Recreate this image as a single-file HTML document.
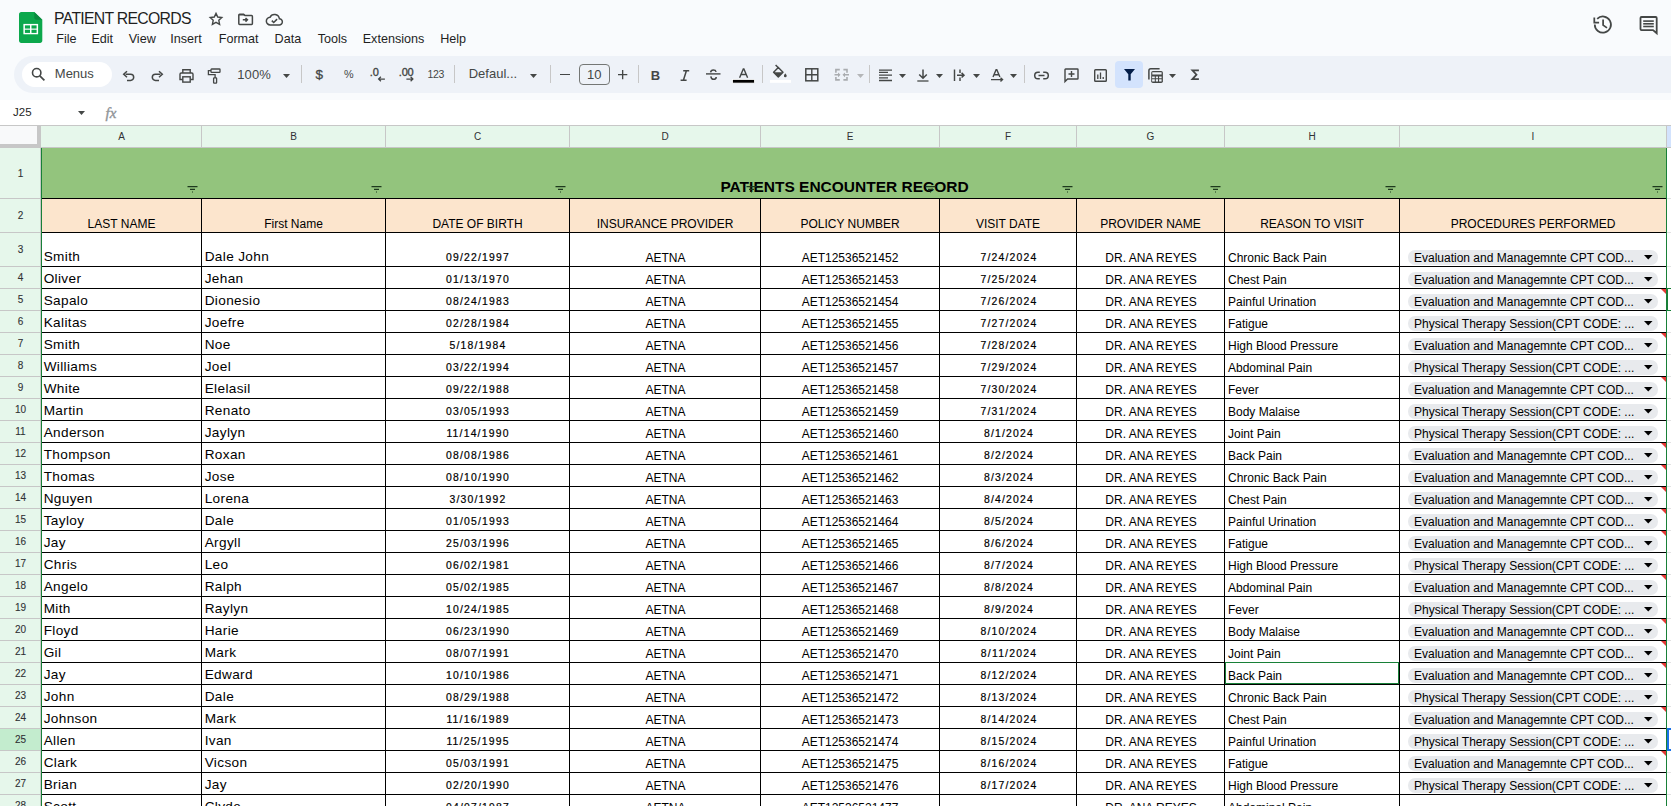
<!DOCTYPE html>
<html><head><meta charset="utf-8"><title>PATIENT RECORDS</title>
<style>
html,body{margin:0;padding:0;}
body{width:1671px;height:806px;overflow:hidden;position:relative;background:#f9fbfd;font-family:"Liberation Sans",sans-serif;}
.t{position:absolute;white-space:nowrap;line-height:1;font-family:"Liberation Sans",sans-serif;}
.r{position:absolute;}
svg{position:absolute;overflow:visible;}
</style></head><body>

<svg style="left:19px;top:12px" width="24" height="31" viewBox="0 0 24 32" preserveAspectRatio="none">
<path d="M2.2 0H15.3L23.3 8V29.8C23.3 31 22.3 32 21.1 32H2.2C1 32 0 31 0 29.8V2.2C0 1 1 0 2.2 0Z" fill="#0ca84c"/>
<path d="M15.3 0L23.3 8H17.3C16.2 8 15.3 7.1 15.3 6Z" fill="#0a8a3e"/>
<rect x="4.4" y="12.3" width="14.7" height="10.7" fill="#fff"/>
<rect x="5.9" y="13.8" width="5.1" height="3.3" fill="#0ca84c"/>
<rect x="12.5" y="13.8" width="5.1" height="3.3" fill="#0ca84c"/>
<rect x="5.9" y="18.3" width="5.1" height="3.3" fill="#0ca84c"/>
<rect x="12.5" y="18.3" width="5.1" height="3.3" fill="#0ca84c"/>
</svg>
<div class="t" style="left:54.1px;top:10.93px;font-size:15.8px;color:#1f1f1f;font-weight:normal;letter-spacing:-0.72px;">PATIENT RECORDS</div>
<svg style="left:208px;top:11px" width="16" height="16" viewBox="0 0 24 24"><path d="M12 3.5l2.6 5.6 6.1.7-4.5 4.2 1.2 6L12 17l-5.4 3 1.2-6-4.5-4.2 6.1-.7z" fill="none" stroke="#444746" stroke-width="2.1" stroke-linejoin="miter"/></svg>
<svg style="left:237.5px;top:13px" width="16" height="12" viewBox="0 0 16 12"><path d="M1.6 1.2h4l1.4 1.4h6.6c.5 0 .8.3.8.8v7.2c0 .5-.3.8-.8.8H1.6c-.5 0-.8-.3-.8-.8V2c0-.5.3-.8.8-.8z" fill="none" stroke="#444746" stroke-width="1.5"/><path d="M1 1h4.8l1.6 1.6H1z" fill="#444746"/><path d="M4.8 6.8h4.2M7.5 5l1.9 1.8-1.9 1.8" fill="none" stroke="#444746" stroke-width="1.5"/></svg>
<svg style="left:265.5px;top:13px" width="17" height="13" viewBox="0 0 17 13"><path d="M4.3 11.9h8.8a3.1 3.1 0 0 0 .3-6.2A5 5 0 0 0 4 4.3 3.8 3.8 0 0 0 4.3 11.9z" fill="none" stroke="#444746" stroke-width="1.5"/><path d="M5.8 7.6l1.9 1.9 3.4-3.4" fill="none" stroke="#444746" stroke-width="1.5"/></svg>
<div class="t" style="left:56.2px;top:32.73px;font-size:12.6px;color:#1f1f1f;font-weight:normal;">File</div>
<div class="t" style="left:91.4px;top:32.73px;font-size:12.6px;color:#1f1f1f;font-weight:normal;">Edit</div>
<div class="t" style="left:128.7px;top:32.73px;font-size:12.6px;color:#1f1f1f;font-weight:normal;">View</div>
<div class="t" style="left:170.2px;top:32.73px;font-size:12.6px;color:#1f1f1f;font-weight:normal;">Insert</div>
<div class="t" style="left:218.7px;top:32.73px;font-size:12.6px;color:#1f1f1f;font-weight:normal;">Format</div>
<div class="t" style="left:274.59999999999997px;top:32.73px;font-size:12.6px;color:#1f1f1f;font-weight:normal;">Data</div>
<div class="t" style="left:317.7px;top:32.73px;font-size:12.6px;color:#1f1f1f;font-weight:normal;">Tools</div>
<div class="t" style="left:362.7px;top:32.73px;font-size:12.6px;color:#1f1f1f;font-weight:normal;">Extensions</div>
<div class="t" style="left:440.2px;top:32.73px;font-size:12.6px;color:#1f1f1f;font-weight:normal;">Help</div>
<svg style="left:1593px;top:15px" width="20" height="20" viewBox="0 0 20 20"><path d="M1.75 9.6A8.1 8.1 0 1 0 4.2 3.8" fill="none" stroke="#444746" stroke-width="1.75"/><path d="M1.3 2.6V7.5H6.1" fill="none" stroke="#444746" stroke-width="1.75"/><path d="M10.1 4.4V10.1L14 12.9" fill="none" stroke="#444746" stroke-width="1.75"/></svg>
<svg style="left:1639px;top:16px" width="20" height="19" viewBox="0 0 20 19"><path d="M1.5 2C1.5 1.4 1.9 1 2.5 1H16.7C17.3 1 17.7 1.4 17.7 2V17.2L14 14.1H2.5C1.9 14.1 1.5 13.7 1.5 13.1Z" fill="none" stroke="#444746" stroke-width="1.8"/><rect x="4.2" y="4.3" width="10.6" height="1.6" fill="#444746"/><rect x="4.2" y="7" width="10.6" height="1.6" fill="#444746"/><rect x="4.2" y="9.7" width="10.6" height="1.6" fill="#444746"/></svg>
<div class="r" style="left:14px;top:56px;width:1700px;height:37px;background:#eef2f8;border-radius:18.5px;"></div>
<div class="r" style="left:21.5px;top:62px;width:90.5px;height:25px;background:#fff;border-radius:12.5px;"></div>
<svg style="left:31px;top:67px" width="15" height="15" viewBox="0 0 15 15"><circle cx="5.7" cy="5.7" r="4.2" fill="none" stroke="#444746" stroke-width="1.6"/><path d="M8.8 8.8l4.6 4.6" stroke="#444746" stroke-width="1.7"/></svg>
<div class="t" style="left:54.8px;top:66.80px;font-size:13px;color:#444746;font-weight:normal;">Menus</div>
<svg style="left:122px;top:70px" width="13" height="12" viewBox="0 0 13 12"><path d="M3.6 4.2h5a3.1 3.1 0 0 1 0 6.2H5" fill="none" stroke="#444746" stroke-width="1.5"/><path d="M5 1.2L1.7 4.2 5 7.2" fill="none" stroke="#444746" stroke-width="1.5"/></svg>
<svg style="left:151px;top:70px" width="13" height="12" viewBox="0 0 13 12"><path d="M9.4 4.2h-5a3.1 3.1 0 0 0 0 6.2H8" fill="none" stroke="#444746" stroke-width="1.5"/><path d="M8 1.2l3.3 3L8 7.2" fill="none" stroke="#444746" stroke-width="1.5"/></svg>
<svg style="left:178.5px;top:68.5px" width="15" height="14" viewBox="0 0 15 14"><path d="M3.8 4V0.8h7.4V4" fill="none" stroke="#444746" stroke-width="1.4"/><path d="M3.5 10.5H1V5.2C1 4.5 1.5 4 2.2 4h10.6c.7 0 1.2.5 1.2 1.2v5.3h-2.5" fill="none" stroke="#444746" stroke-width="1.4"/><rect x="3.8" y="7.8" width="7.4" height="5.3" fill="none" stroke="#444746" stroke-width="1.4"/></svg>
<svg style="left:207px;top:67.5px" width="14" height="16" viewBox="0 0 14 16"><rect x="4" y="1" width="9" height="3.4" rx="0.6" fill="none" stroke="#444746" stroke-width="1.3"/><path d="M4 2.7H1.4v4h6.7v3.2" fill="none" stroke="#444746" stroke-width="1.3"/><rect x="6.6" y="9.9" width="3" height="5.3" rx="0.6" fill="none" stroke="#444746" stroke-width="1.3"/></svg>
<div class="t" style="left:237.2px;top:68.40px;font-size:13px;color:#444746;font-weight:normal;letter-spacing:0.15px;">100%</div>
<svg style="left:283px;top:73.5px" width="7" height="4" viewBox="0 0 7 4"><path d="M0 0h7L3.5 4z" fill="#444746"/></svg>
<div class="r" style="left:301px;top:65px;width:1px;height:18px;background:#c7c7c7;"></div>
<div class="t" style="left:315.6px;top:67.97px;font-size:13.5px;color:#444746;font-weight:normal;-webkit-text-stroke:0.3px #444746;">$</div>
<div class="t" style="left:344px;top:68.66px;font-size:10.8px;color:#444746;font-weight:normal;">%</div>
<div class="t" style="left:369.8px;top:66.59px;font-size:11px;color:#444746;font-weight:normal;-webkit-text-stroke:0.35px #444746;">.0</div>
<svg style="left:377px;top:76.4px" width="9" height="6" viewBox="0 0 9 6"><path d="M7.9 3H1.6M3.9 0.8L1.6 3l2.3 2.2" fill="none" stroke="#444746" stroke-width="1.25"/></svg>
<div class="t" style="left:398.8px;top:66.59px;font-size:11px;color:#444746;font-weight:normal;-webkit-text-stroke:0.35px #444746;letter-spacing:-0.2px;">.00</div>
<svg style="left:405px;top:76.4px" width="9" height="6" viewBox="0 0 9 6"><path d="M1.4 3h6.5M5.6 0.8L7.9 3 5.6 5.2" fill="none" stroke="#444746" stroke-width="1.25"/></svg>
<div class="t" style="left:427.5px;top:68.91px;font-size:10.5px;color:#444746;font-weight:normal;letter-spacing:-0.3px;">123</div>
<div class="r" style="left:454px;top:65px;width:1px;height:18px;background:#c7c7c7;"></div>
<div class="t" style="left:468.7px;top:67.20px;font-size:13px;color:#444746;font-weight:normal;">Defaul...</div>
<svg style="left:530px;top:73.5px" width="7" height="4" viewBox="0 0 7 4"><path d="M0 0h7L3.5 4z" fill="#444746"/></svg>
<div class="r" style="left:550px;top:65px;width:1px;height:18px;background:#c7c7c7;"></div>
<div class="r" style="left:560px;top:74.1px;width:9.7px;height:1.3px;background:#444746;"></div>
<div class="r" style="left:579px;top:64px;width:31px;height:20.5px;background:transparent;border:1.1px solid #747775;border-radius:4px;box-sizing:border-box;"></div>
<div class="t" style="left:294.20000000000005px;width:600px;text-align:center;top:67.60px;font-size:13px;color:#444746;font-weight:normal;">10</div>
<svg style="left:618.2px;top:70.2px" width="9.3" height="9.3" viewBox="0 0 9.3 9.3"><path d="M0 4.65h9.3M4.65 0v9.3" stroke="#444746" stroke-width="1.35"/></svg>
<div class="r" style="left:638px;top:65px;width:1px;height:18px;background:#c7c7c7;"></div>
<div class="t" style="left:650.8px;top:68.50px;font-size:13px;color:#444746;font-weight:bold;">B</div>
<svg style="left:680px;top:69.5px" width="10" height="11" viewBox="0 0 10 11"><path d="M3.2 0.8h6M0.6 10.3h6M6.4 0.8L3.4 10.3" fill="none" stroke="#444746" stroke-width="1.5"/></svg>
<svg style="left:706px;top:69.1px" width="15" height="12" viewBox="0 0 15 12"><path d="M0 4.9h14.5" stroke="#444746" stroke-width="1.4"/><path d="M4.6 3.4C4.8 1.8 5.9 1 7.4 1c1.4 0 2.4.7 2.7 1.9" fill="none" stroke="#444746" stroke-width="1.5"/><path d="M4.8 7.3c.3 1.9 1.3 3 2.8 3 1.6 0 2.6-1 2.6-2.4" fill="none" stroke="#444746" stroke-width="1.5"/></svg>
<svg style="left:732px;top:68px" width="23" height="16" viewBox="0 0 23 16"><path d="M7.6 9.8L11.3 1h.6l3.7 8.8M9 6.5h5.3" fill="none" stroke="#444746" stroke-width="1.4"/><rect x="0.5" y="11.5" width="22" height="3.6" fill="#000" stroke="#fff" stroke-width="0.8"/></svg>
<div class="r" style="left:762px;top:65px;width:1px;height:18px;background:#c7c7c7;"></div>
<svg style="left:770px;top:64px" width="22" height="20" viewBox="0 0 22 20"><path d="M3.6 8.2L8.3 3.5 13 8.2 8.3 12.9z" fill="none" stroke="#444746" stroke-width="1.45" stroke-linejoin="round"/><path d="M3.6 8.2H13L8.3 12.9z" fill="#444746"/><path d="M5.6 1L8.6 4" stroke="#444746" stroke-width="1.45"/><circle cx="15.3" cy="11.9" r="1.35" fill="#444746"/><path d="M15.3 9.3l1.2 2.3h-2.4z" fill="#444746"/><rect x="0" y="15.9" width="21" height="2.9" fill="#fff"/></svg>
<svg style="left:804.5px;top:68px" width="14" height="14" viewBox="0 0 14 14"><rect x="0.8" y="0.8" width="12" height="12" fill="none" stroke="#444746" stroke-width="1.5"/><path d="M6.8 0.8v12M0.8 6.8h12" stroke="#444746" stroke-width="1.4"/></svg>
<svg style="left:833px;top:67px" width="18" height="16" viewBox="0 0 18 16"><path d="M6.8 2.6H2.9V5.7M2.9 10.1V12.9H6.8M10.4 2.6H14V5.7M14 10.1V12.9H10.4" fill="none" stroke="#a9acaf" stroke-width="1.6"/><path d="M1.5 7.8H6M16 7.8H11.2" stroke="#a9acaf" stroke-width="1.6"/><path d="M5 5.4L7.5 7.8 5 10.2zM12 5.4L9.5 7.8 12 10.2z" fill="#a9acaf"/></svg>
<svg style="left:857px;top:73.8px" width="7" height="4" viewBox="0 0 7 4"><path d="M0 0h7L3.5 4z" fill="#b4b6b8"/></svg>
<div class="r" style="left:869px;top:65px;width:1px;height:18px;background:#c7c7c7;"></div>
<svg style="left:878.5px;top:68.5px" width="14" height="13" viewBox="0 0 14 13"><path d="M0 1.1h13M0 3.4h9M0 6.2h13M0 8.8h9M0 11.5h13" stroke="#444746" stroke-width="1.3"/></svg>
<svg style="left:899px;top:73.8px" width="7" height="4" viewBox="0 0 7 4"><path d="M0 0h7L3.5 4z" fill="#444746"/></svg>
<svg style="left:917px;top:68.5px" width="12" height="13" viewBox="0 0 12 13"><path d="M0.3 12h11.2" stroke="#444746" stroke-width="1.3"/><path d="M6 0.5v8.5M2.2 5.5L6 9.3l3.8-3.8" fill="none" stroke="#444746" stroke-width="1.5"/></svg>
<svg style="left:936px;top:73.8px" width="7" height="4" viewBox="0 0 7 4"><path d="M0 0h7L3.5 4z" fill="#444746"/></svg>
<svg style="left:953px;top:69px" width="13" height="13" viewBox="0 0 13 13"><path d="M1.5 0.6V11.9M7 0.6V3.9M7 8.4V11.9" stroke="#444746" stroke-width="1.45"/><path d="M4 6.2H10.6M8.6 3.9L11 6.2 8.6 8.5" fill="none" stroke="#444746" stroke-width="1.5"/></svg>
<svg style="left:973px;top:73.8px" width="7" height="4" viewBox="0 0 7 4"><path d="M0 0h7L3.5 4z" fill="#444746"/></svg>
<svg style="left:990.5px;top:68.5px" width="13" height="13" viewBox="0 0 13 13"><path d="M2 8l3.1-7.3h.7L8.9 8M3 5.7h5" fill="none" stroke="#444746" stroke-width="1.4"/><path d="M0 10.6h11.5M9.5 8.8l2 1.8-2 1.8" fill="none" stroke="#444746" stroke-width="1.4"/></svg>
<svg style="left:1010px;top:73.8px" width="7" height="4" viewBox="0 0 7 4"><path d="M0 0h7L3.5 4z" fill="#444746"/></svg>
<div class="r" style="left:1024px;top:65px;width:1px;height:18px;background:#c7c7c7;"></div>
<svg style="left:1034px;top:70.5px" width="15" height="9" viewBox="0 0 15 9"><path d="M5.8 1.2H4A3.3 3.3 0 0 0 4 7.8h1.8M9.2 1.2H11a3.3 3.3 0 0 1 0 6.6H9.2M4.5 4.5h6" fill="none" stroke="#444746" stroke-width="1.5"/></svg>
<svg style="left:1063.5px;top:67.5px" width="15" height="15" viewBox="0 0 15 15"><path d="M1 1.6C1 1.2 1.2 1 1.6 1h11.8c.4 0 .6.2.6.6v8.8c0 .4-.2.6-.6.6H3.6L1 13.6z" fill="none" stroke="#444746" stroke-width="1.4"/><path d="M7.5 3v6M4.5 6h6" stroke="#444746" stroke-width="1.4"/></svg>
<svg style="left:1094px;top:68.5px" width="13" height="13" viewBox="0 0 13 13"><rect x="0.7" y="0.7" width="11.6" height="11.6" rx="0.8" fill="none" stroke="#444746" stroke-width="1.4"/><path d="M3.8 5.5v4.5M6.5 3.5v6.5M9.2 8v2" stroke="#444746" stroke-width="1.3"/></svg>
<div class="r" style="left:1115px;top:61px;width:28px;height:26.5px;background:#d3e3fd;border-radius:4px;"></div>
<svg style="left:1123.5px;top:69px" width="11" height="12" viewBox="0 0 11 12"><path d="M0 0h11L6.7 5.2V11.6H4.3V5.2z" fill="#041e49"/></svg>
<svg style="left:1147px;top:67px" width="17" height="17" viewBox="0 0 17 17"><path d="M1.9 12.6V3.7C1.9 2.6 2.6 1.85 3.7 1.85H12.6" fill="none" stroke="#444746" stroke-width="1.5"/><rect x="4.2" y="4" width="11.7" height="11.9" rx="1.7" fill="#444746"/><path d="M5.3 5.3H14.6V7.6H5.3zM5.1 9.4H7.8V11.2H5.1zM8.85 9.4H11V11.2H8.85zM12.1 9.4H14.6V11.2H12.1zM5.1 12.3H7.8V14.6H5.1zM8.85 12.3H11V14.6H8.85zM12.1 12.3H14.6V14.6H12.1z" fill="#eef2f8"/></svg>
<svg style="left:1169px;top:73.8px" width="7" height="4" viewBox="0 0 7 4"><path d="M0 0h7L3.5 4z" fill="#444746"/></svg>
<svg style="left:1191px;top:69px" width="9" height="12" viewBox="0 0 9 12"><path d="M7.9 1.3H1.4L5.5 5.7 1.4 10.1H7.9" fill="none" stroke="#444746" stroke-width="1.75" stroke-linejoin="miter" stroke-miterlimit="3"/></svg>
<div class="r" style="left:0px;top:100px;width:1671px;height:25px;background:#fff;"></div>
<div class="t" style="left:13px;top:107.07px;font-size:11.5px;color:#1f1f1f;font-weight:normal;">J25</div>
<svg style="left:78px;top:111px" width="7" height="4" viewBox="0 0 7 4"><path d="M0 0h7L3.5 4z" fill="#444746"/></svg>
<div class="t" style="left:105.5px;top:105.60px;font-size:15px;color:#8f9397;font-weight:normal;font-family:'Liberation Serif',serif;-webkit-text-stroke:0.35px #8f9397;"><i>fx</i></div>
<div class="r" style="left:0px;top:125px;width:1671px;height:1px;background:#c7c7c7;"></div>
<div class="r" style="left:0px;top:126px;width:1671px;height:680px;background:#fff;"></div>
<div class="r" style="left:0px;top:126px;width:37px;height:18px;background:#f8f9fa;"></div>
<div class="r" style="left:37px;top:126px;width:4px;height:22px;background:#c7c7c7;"></div>
<div class="r" style="left:0px;top:144px;width:41px;height:4px;background:#c7c7c7;"></div>
<div class="r" style="left:41px;top:126px;width:1626px;height:21px;background:#e6f7eb;"></div>
<div class="r" style="left:1667px;top:126px;width:10px;height:21px;background:#d3e3fd;"></div>
<div class="r" style="left:41px;top:147px;width:1630px;height:1px;background:#c7c7c7;"></div>
<div class="r" style="left:201px;top:126px;width:1px;height:21px;background:#c7c7c7;"></div>
<div class="t" style="left:-178.5px;width:600px;text-align:center;top:132.44px;font-size:10px;color:#303134;font-weight:normal;">A</div>
<div class="r" style="left:385px;top:126px;width:1px;height:21px;background:#c7c7c7;"></div>
<div class="t" style="left:-6.5px;width:600px;text-align:center;top:132.44px;font-size:10px;color:#303134;font-weight:normal;">B</div>
<div class="r" style="left:569px;top:126px;width:1px;height:21px;background:#c7c7c7;"></div>
<div class="t" style="left:177.5px;width:600px;text-align:center;top:132.44px;font-size:10px;color:#303134;font-weight:normal;">C</div>
<div class="r" style="left:760px;top:126px;width:1px;height:21px;background:#c7c7c7;"></div>
<div class="t" style="left:365.0px;width:600px;text-align:center;top:132.44px;font-size:10px;color:#303134;font-weight:normal;">D</div>
<div class="r" style="left:939px;top:126px;width:1px;height:21px;background:#c7c7c7;"></div>
<div class="t" style="left:550.0px;width:600px;text-align:center;top:132.44px;font-size:10px;color:#303134;font-weight:normal;">E</div>
<div class="r" style="left:1076px;top:126px;width:1px;height:21px;background:#c7c7c7;"></div>
<div class="t" style="left:708.0px;width:600px;text-align:center;top:132.44px;font-size:10px;color:#303134;font-weight:normal;">F</div>
<div class="r" style="left:1224px;top:126px;width:1px;height:21px;background:#c7c7c7;"></div>
<div class="t" style="left:850.5px;width:600px;text-align:center;top:132.44px;font-size:10px;color:#303134;font-weight:normal;">G</div>
<div class="r" style="left:1399px;top:126px;width:1px;height:21px;background:#c7c7c7;"></div>
<div class="t" style="left:1012.0px;width:600px;text-align:center;top:132.44px;font-size:10px;color:#303134;font-weight:normal;">H</div>
<div class="r" style="left:1666px;top:126px;width:1px;height:21px;background:#c7c7c7;"></div>
<div class="t" style="left:1233.0px;width:600px;text-align:center;top:132.44px;font-size:10px;color:#303134;font-weight:normal;">I</div>
<div class="r" style="left:0px;top:148px;width:40px;height:658px;background:#e6f7eb;"></div>
<div class="r" style="left:40px;top:148px;width:1px;height:658px;background:#c7c7c7;"></div>
<div class="r" style="left:0px;top:198px;width:40px;height:1px;background:#c7c7c7;"></div>
<div class="t" style="left:-279.5px;width:600px;text-align:center;top:168.53px;font-size:10px;color:#303134;font-weight:normal;-webkit-text-stroke:0.1px #303134;">1</div>
<div class="r" style="left:0px;top:232px;width:40px;height:1px;background:#c7c7c7;"></div>
<div class="t" style="left:-279.5px;width:600px;text-align:center;top:211.03px;font-size:10px;color:#303134;font-weight:normal;-webkit-text-stroke:0.1px #303134;">2</div>
<div class="r" style="left:0px;top:266px;width:40px;height:1px;background:#c7c7c7;"></div>
<div class="t" style="left:-279.5px;width:600px;text-align:center;top:245.03px;font-size:10px;color:#303134;font-weight:normal;-webkit-text-stroke:0.1px #303134;">3</div>
<div class="r" style="left:0px;top:288px;width:40px;height:1px;background:#c7c7c7;"></div>
<div class="t" style="left:-279.5px;width:600px;text-align:center;top:273.04px;font-size:10px;color:#303134;font-weight:normal;-webkit-text-stroke:0.1px #303134;">4</div>
<div class="r" style="left:0px;top:310px;width:40px;height:1px;background:#c7c7c7;"></div>
<div class="t" style="left:-279.5px;width:600px;text-align:center;top:295.04px;font-size:10px;color:#303134;font-weight:normal;-webkit-text-stroke:0.1px #303134;">5</div>
<div class="r" style="left:0px;top:332px;width:40px;height:1px;background:#c7c7c7;"></div>
<div class="t" style="left:-279.5px;width:600px;text-align:center;top:317.04px;font-size:10px;color:#303134;font-weight:normal;-webkit-text-stroke:0.1px #303134;">6</div>
<div class="r" style="left:0px;top:354px;width:40px;height:1px;background:#c7c7c7;"></div>
<div class="t" style="left:-279.5px;width:600px;text-align:center;top:339.04px;font-size:10px;color:#303134;font-weight:normal;-webkit-text-stroke:0.1px #303134;">7</div>
<div class="r" style="left:0px;top:376px;width:40px;height:1px;background:#c7c7c7;"></div>
<div class="t" style="left:-279.5px;width:600px;text-align:center;top:361.04px;font-size:10px;color:#303134;font-weight:normal;-webkit-text-stroke:0.1px #303134;">8</div>
<div class="r" style="left:0px;top:398px;width:40px;height:1px;background:#c7c7c7;"></div>
<div class="t" style="left:-279.5px;width:600px;text-align:center;top:383.04px;font-size:10px;color:#303134;font-weight:normal;-webkit-text-stroke:0.1px #303134;">9</div>
<div class="r" style="left:0px;top:420px;width:40px;height:1px;background:#c7c7c7;"></div>
<div class="t" style="left:-279.5px;width:600px;text-align:center;top:405.04px;font-size:10px;color:#303134;font-weight:normal;-webkit-text-stroke:0.1px #303134;">10</div>
<div class="r" style="left:0px;top:442px;width:40px;height:1px;background:#c7c7c7;"></div>
<div class="t" style="left:-279.5px;width:600px;text-align:center;top:427.04px;font-size:10px;color:#303134;font-weight:normal;-webkit-text-stroke:0.1px #303134;">11</div>
<div class="r" style="left:0px;top:464px;width:40px;height:1px;background:#c7c7c7;"></div>
<div class="t" style="left:-279.5px;width:600px;text-align:center;top:449.04px;font-size:10px;color:#303134;font-weight:normal;-webkit-text-stroke:0.1px #303134;">12</div>
<div class="r" style="left:0px;top:486px;width:40px;height:1px;background:#c7c7c7;"></div>
<div class="t" style="left:-279.5px;width:600px;text-align:center;top:471.04px;font-size:10px;color:#303134;font-weight:normal;-webkit-text-stroke:0.1px #303134;">13</div>
<div class="r" style="left:0px;top:508px;width:40px;height:1px;background:#c7c7c7;"></div>
<div class="t" style="left:-279.5px;width:600px;text-align:center;top:493.04px;font-size:10px;color:#303134;font-weight:normal;-webkit-text-stroke:0.1px #303134;">14</div>
<div class="r" style="left:0px;top:530px;width:40px;height:1px;background:#c7c7c7;"></div>
<div class="t" style="left:-279.5px;width:600px;text-align:center;top:515.03px;font-size:10px;color:#303134;font-weight:normal;-webkit-text-stroke:0.1px #303134;">15</div>
<div class="r" style="left:0px;top:552px;width:40px;height:1px;background:#c7c7c7;"></div>
<div class="t" style="left:-279.5px;width:600px;text-align:center;top:537.03px;font-size:10px;color:#303134;font-weight:normal;-webkit-text-stroke:0.1px #303134;">16</div>
<div class="r" style="left:0px;top:574px;width:40px;height:1px;background:#c7c7c7;"></div>
<div class="t" style="left:-279.5px;width:600px;text-align:center;top:559.03px;font-size:10px;color:#303134;font-weight:normal;-webkit-text-stroke:0.1px #303134;">17</div>
<div class="r" style="left:0px;top:596px;width:40px;height:1px;background:#c7c7c7;"></div>
<div class="t" style="left:-279.5px;width:600px;text-align:center;top:581.03px;font-size:10px;color:#303134;font-weight:normal;-webkit-text-stroke:0.1px #303134;">18</div>
<div class="r" style="left:0px;top:618px;width:40px;height:1px;background:#c7c7c7;"></div>
<div class="t" style="left:-279.5px;width:600px;text-align:center;top:603.03px;font-size:10px;color:#303134;font-weight:normal;-webkit-text-stroke:0.1px #303134;">19</div>
<div class="r" style="left:0px;top:640px;width:40px;height:1px;background:#c7c7c7;"></div>
<div class="t" style="left:-279.5px;width:600px;text-align:center;top:625.03px;font-size:10px;color:#303134;font-weight:normal;-webkit-text-stroke:0.1px #303134;">20</div>
<div class="r" style="left:0px;top:662px;width:40px;height:1px;background:#c7c7c7;"></div>
<div class="t" style="left:-279.5px;width:600px;text-align:center;top:647.03px;font-size:10px;color:#303134;font-weight:normal;-webkit-text-stroke:0.1px #303134;">21</div>
<div class="r" style="left:0px;top:684px;width:40px;height:1px;background:#c7c7c7;"></div>
<div class="t" style="left:-279.5px;width:600px;text-align:center;top:669.03px;font-size:10px;color:#303134;font-weight:normal;-webkit-text-stroke:0.1px #303134;">22</div>
<div class="r" style="left:0px;top:706px;width:40px;height:1px;background:#c7c7c7;"></div>
<div class="t" style="left:-279.5px;width:600px;text-align:center;top:691.03px;font-size:10px;color:#303134;font-weight:normal;-webkit-text-stroke:0.1px #303134;">23</div>
<div class="r" style="left:0px;top:728px;width:40px;height:1px;background:#c7c7c7;"></div>
<div class="t" style="left:-279.5px;width:600px;text-align:center;top:713.03px;font-size:10px;color:#303134;font-weight:normal;-webkit-text-stroke:0.1px #303134;">24</div>
<div class="r" style="left:0px;top:729px;width:40px;height:21px;background:#c3ecce;"></div>
<div class="r" style="left:0px;top:750px;width:40px;height:1px;background:#c7c7c7;"></div>
<div class="t" style="left:-279.5px;width:600px;text-align:center;top:735.03px;font-size:10px;color:#303134;font-weight:normal;-webkit-text-stroke:0.1px #303134;">25</div>
<div class="r" style="left:0px;top:772px;width:40px;height:1px;background:#c7c7c7;"></div>
<div class="t" style="left:-279.5px;width:600px;text-align:center;top:757.03px;font-size:10px;color:#303134;font-weight:normal;-webkit-text-stroke:0.1px #303134;">26</div>
<div class="r" style="left:0px;top:794px;width:40px;height:1px;background:#c7c7c7;"></div>
<div class="t" style="left:-279.5px;width:600px;text-align:center;top:779.03px;font-size:10px;color:#303134;font-weight:normal;-webkit-text-stroke:0.1px #303134;">27</div>
<div class="r" style="left:0px;top:816px;width:40px;height:1px;background:#c7c7c7;"></div>
<div class="t" style="left:-279.5px;width:600px;text-align:center;top:801.03px;font-size:10px;color:#303134;font-weight:normal;-webkit-text-stroke:0.1px #303134;">28</div>
<div class="r" style="left:41px;top:148px;width:1625px;height:50px;background:#93c47d;"></div>
<div class="t" style="left:720.4px;top:179.48px;font-size:15.5px;color:#000;font-weight:bold;">PATIENTS ENCOUNTER RECORD</div>
<svg style="left:187px;top:185px" width="11" height="8" viewBox="0 0 11 8"><path d="M0.5 1.6h10M3 4.4h5M5 7h1" stroke="#1e3a1e" stroke-width="1.2"/></svg>
<svg style="left:371px;top:185px" width="11" height="8" viewBox="0 0 11 8"><path d="M0.5 1.6h10M3 4.4h5M5 7h1" stroke="#1e3a1e" stroke-width="1.2"/></svg>
<svg style="left:555px;top:185px" width="11" height="8" viewBox="0 0 11 8"><path d="M0.5 1.6h10M3 4.4h5M5 7h1" stroke="#1e3a1e" stroke-width="1.2"/></svg>
<svg style="left:746px;top:185px" width="11" height="8" viewBox="0 0 11 8"><path d="M0.5 1.6h10M3 4.4h5M5 7h1" stroke="#1e3a1e" stroke-width="1.2"/></svg>
<svg style="left:925px;top:185px" width="11" height="8" viewBox="0 0 11 8"><path d="M0.5 1.6h10M3 4.4h5M5 7h1" stroke="#1e3a1e" stroke-width="1.2"/></svg>
<svg style="left:1062px;top:185px" width="11" height="8" viewBox="0 0 11 8"><path d="M0.5 1.6h10M3 4.4h5M5 7h1" stroke="#1e3a1e" stroke-width="1.2"/></svg>
<svg style="left:1210px;top:185px" width="11" height="8" viewBox="0 0 11 8"><path d="M0.5 1.6h10M3 4.4h5M5 7h1" stroke="#1e3a1e" stroke-width="1.2"/></svg>
<svg style="left:1385px;top:185px" width="11" height="8" viewBox="0 0 11 8"><path d="M0.5 1.6h10M3 4.4h5M5 7h1" stroke="#1e3a1e" stroke-width="1.2"/></svg>
<svg style="left:1652px;top:185px" width="11" height="8" viewBox="0 0 11 8"><path d="M0.5 1.6h10M3 4.4h5M5 7h1" stroke="#1e3a1e" stroke-width="1.2"/></svg>
<div class="r" style="left:41px;top:199px;width:1625px;height:33px;background:#fce5cd;"></div>
<div class="t" style="left:-178.5px;width:600px;text-align:center;top:217.84px;font-size:12px;color:#000;font-weight:normal;">LAST NAME</div>
<div class="t" style="left:-6.5px;width:600px;text-align:center;top:217.84px;font-size:12px;color:#000;font-weight:normal;">First Name</div>
<div class="t" style="left:177.5px;width:600px;text-align:center;top:217.84px;font-size:12px;color:#000;font-weight:normal;">DATE OF BIRTH</div>
<div class="t" style="left:365.0px;width:600px;text-align:center;top:217.84px;font-size:12px;color:#000;font-weight:normal;">INSURANCE PROVIDER</div>
<div class="t" style="left:550.0px;width:600px;text-align:center;top:217.84px;font-size:12px;color:#000;font-weight:normal;">POLICY NUMBER</div>
<div class="t" style="left:708.0px;width:600px;text-align:center;top:217.84px;font-size:12px;color:#000;font-weight:normal;">VISIT DATE</div>
<div class="t" style="left:850.5px;width:600px;text-align:center;top:217.84px;font-size:12px;color:#000;font-weight:normal;">PROVIDER NAME</div>
<div class="t" style="left:1012.0px;width:600px;text-align:center;top:217.84px;font-size:12px;color:#000;font-weight:normal;">REASON TO VISIT</div>
<div class="t" style="left:1233.0px;width:600px;text-align:center;top:217.84px;font-size:12px;color:#000;font-weight:normal;">PROCEDURES PERFORMED</div>
<div class="t" style="left:43.7px;top:249.89px;font-size:13.6px;color:#000;font-weight:normal;letter-spacing:0.35px;">Smith</div>
<div class="t" style="left:204.7px;top:249.89px;font-size:13.6px;color:#000;font-weight:normal;letter-spacing:0.35px;">Dale John</div>
<div class="t" style="left:178px;width:600px;text-align:center;top:252.60px;font-size:10.4px;color:#000;font-weight:normal;letter-spacing:1.2px;-webkit-text-stroke:0.2px #000;">09/22/1997</div>
<div class="t" style="left:365.5px;width:600px;text-align:center;top:252.24px;font-size:12px;color:#000;font-weight:normal;">AETNA</div>
<div class="t" style="left:550px;width:600px;text-align:center;top:252.24px;font-size:12px;color:#000;font-weight:normal;">AET12536521452</div>
<div class="t" style="left:709px;width:600px;text-align:center;top:252.60px;font-size:10.4px;color:#000;font-weight:normal;letter-spacing:1.2px;-webkit-text-stroke:0.2px #000;">7/24/2024</div>
<div class="t" style="left:851px;width:600px;text-align:center;top:252.24px;font-size:12px;color:#000;font-weight:normal;">DR. ANA REYES</div>
<div class="t" style="left:1228px;top:252.24px;font-size:12px;color:#000;font-weight:normal;">Chronic Back Pain</div>
<div class="r" style="left:1408px;top:250.2px;width:250px;height:14.4px;background:#e8eaed;border-radius:7.2px;"></div>
<div class="t" style="left:1414px;top:252.24px;font-size:12px;color:#000;font-weight:normal;">Evaluation and Managemnte CPT COD...</div>
<svg style="left:1644.3px;top:255.4px" width="8.5" height="4.6" viewBox="0 0 8.5 4.6"><path d="M0 0h8.5L4.25 4.6z" fill="#000"/></svg>
<div class="t" style="left:43.7px;top:271.89px;font-size:13.6px;color:#000;font-weight:normal;letter-spacing:0.35px;">Oliver</div>
<div class="t" style="left:204.7px;top:271.89px;font-size:13.6px;color:#000;font-weight:normal;letter-spacing:0.35px;">Jehan</div>
<div class="t" style="left:178px;width:600px;text-align:center;top:274.60px;font-size:10.4px;color:#000;font-weight:normal;letter-spacing:1.2px;-webkit-text-stroke:0.2px #000;">01/13/1970</div>
<div class="t" style="left:365.5px;width:600px;text-align:center;top:274.24px;font-size:12px;color:#000;font-weight:normal;">AETNA</div>
<div class="t" style="left:550px;width:600px;text-align:center;top:274.24px;font-size:12px;color:#000;font-weight:normal;">AET12536521453</div>
<div class="t" style="left:709px;width:600px;text-align:center;top:274.60px;font-size:10.4px;color:#000;font-weight:normal;letter-spacing:1.2px;-webkit-text-stroke:0.2px #000;">7/25/2024</div>
<div class="t" style="left:851px;width:600px;text-align:center;top:274.24px;font-size:12px;color:#000;font-weight:normal;">DR. ANA REYES</div>
<div class="t" style="left:1228px;top:274.24px;font-size:12px;color:#000;font-weight:normal;">Chest Pain</div>
<div class="r" style="left:1408px;top:272.2px;width:250px;height:14.4px;background:#e8eaed;border-radius:7.2px;"></div>
<div class="t" style="left:1414px;top:274.24px;font-size:12px;color:#000;font-weight:normal;">Evaluation and Managemnte CPT COD...</div>
<svg style="left:1644.3px;top:277.4px" width="8.5" height="4.6" viewBox="0 0 8.5 4.6"><path d="M0 0h8.5L4.25 4.6z" fill="#000"/></svg>
<div class="t" style="left:43.7px;top:293.89px;font-size:13.6px;color:#000;font-weight:normal;letter-spacing:0.35px;">Sapalo</div>
<div class="t" style="left:204.7px;top:293.89px;font-size:13.6px;color:#000;font-weight:normal;letter-spacing:0.35px;">Dionesio</div>
<div class="t" style="left:178px;width:600px;text-align:center;top:296.60px;font-size:10.4px;color:#000;font-weight:normal;letter-spacing:1.2px;-webkit-text-stroke:0.2px #000;">08/24/1983</div>
<div class="t" style="left:365.5px;width:600px;text-align:center;top:296.24px;font-size:12px;color:#000;font-weight:normal;">AETNA</div>
<div class="t" style="left:550px;width:600px;text-align:center;top:296.24px;font-size:12px;color:#000;font-weight:normal;">AET12536521454</div>
<div class="t" style="left:709px;width:600px;text-align:center;top:296.60px;font-size:10.4px;color:#000;font-weight:normal;letter-spacing:1.2px;-webkit-text-stroke:0.2px #000;">7/26/2024</div>
<div class="t" style="left:851px;width:600px;text-align:center;top:296.24px;font-size:12px;color:#000;font-weight:normal;">DR. ANA REYES</div>
<div class="t" style="left:1228px;top:296.24px;font-size:12px;color:#000;font-weight:normal;">Painful Urination</div>
<div class="r" style="left:1408px;top:294.2px;width:250px;height:14.4px;background:#e8eaed;border-radius:7.2px;"></div>
<div class="t" style="left:1414px;top:296.24px;font-size:12px;color:#000;font-weight:normal;">Evaluation and Managemnte CPT COD...</div>
<svg style="left:1644.3px;top:299.4px" width="8.5" height="4.6" viewBox="0 0 8.5 4.6"><path d="M0 0h8.5L4.25 4.6z" fill="#000"/></svg>
<svg style="left:1661px;top:289px" width="6" height="6" viewBox="0 0 6 6"><path d="M0 0h6v6z" fill="#e53935"/></svg>
<div class="t" style="left:43.7px;top:315.89px;font-size:13.6px;color:#000;font-weight:normal;letter-spacing:0.35px;">Kalitas</div>
<div class="t" style="left:204.7px;top:315.89px;font-size:13.6px;color:#000;font-weight:normal;letter-spacing:0.35px;">Joefre</div>
<div class="t" style="left:178px;width:600px;text-align:center;top:318.60px;font-size:10.4px;color:#000;font-weight:normal;letter-spacing:1.2px;-webkit-text-stroke:0.2px #000;">02/28/1984</div>
<div class="t" style="left:365.5px;width:600px;text-align:center;top:318.24px;font-size:12px;color:#000;font-weight:normal;">AETNA</div>
<div class="t" style="left:550px;width:600px;text-align:center;top:318.24px;font-size:12px;color:#000;font-weight:normal;">AET12536521455</div>
<div class="t" style="left:709px;width:600px;text-align:center;top:318.60px;font-size:10.4px;color:#000;font-weight:normal;letter-spacing:1.2px;-webkit-text-stroke:0.2px #000;">7/27/2024</div>
<div class="t" style="left:851px;width:600px;text-align:center;top:318.24px;font-size:12px;color:#000;font-weight:normal;">DR. ANA REYES</div>
<div class="t" style="left:1228px;top:318.24px;font-size:12px;color:#000;font-weight:normal;">Fatigue</div>
<div class="r" style="left:1408px;top:316.2px;width:250px;height:14.4px;background:#e8eaed;border-radius:7.2px;"></div>
<div class="t" style="left:1414px;top:318.24px;font-size:12px;color:#000;font-weight:normal;">Physical Therapy Session(CPT CODE: ...</div>
<svg style="left:1644.3px;top:321.4px" width="8.5" height="4.6" viewBox="0 0 8.5 4.6"><path d="M0 0h8.5L4.25 4.6z" fill="#000"/></svg>
<div class="t" style="left:43.7px;top:337.89px;font-size:13.6px;color:#000;font-weight:normal;letter-spacing:0.35px;">Smith</div>
<div class="t" style="left:204.7px;top:337.89px;font-size:13.6px;color:#000;font-weight:normal;letter-spacing:0.35px;">Noe</div>
<div class="t" style="left:178px;width:600px;text-align:center;top:340.60px;font-size:10.4px;color:#000;font-weight:normal;letter-spacing:1.2px;-webkit-text-stroke:0.2px #000;">5/18/1984</div>
<div class="t" style="left:365.5px;width:600px;text-align:center;top:340.24px;font-size:12px;color:#000;font-weight:normal;">AETNA</div>
<div class="t" style="left:550px;width:600px;text-align:center;top:340.24px;font-size:12px;color:#000;font-weight:normal;">AET12536521456</div>
<div class="t" style="left:709px;width:600px;text-align:center;top:340.60px;font-size:10.4px;color:#000;font-weight:normal;letter-spacing:1.2px;-webkit-text-stroke:0.2px #000;">7/28/2024</div>
<div class="t" style="left:851px;width:600px;text-align:center;top:340.24px;font-size:12px;color:#000;font-weight:normal;">DR. ANA REYES</div>
<div class="t" style="left:1228px;top:340.24px;font-size:12px;color:#000;font-weight:normal;">High Blood Pressure</div>
<div class="r" style="left:1408px;top:338.2px;width:250px;height:14.4px;background:#e8eaed;border-radius:7.2px;"></div>
<div class="t" style="left:1414px;top:340.24px;font-size:12px;color:#000;font-weight:normal;">Evaluation and Managemnte CPT COD...</div>
<svg style="left:1644.3px;top:343.4px" width="8.5" height="4.6" viewBox="0 0 8.5 4.6"><path d="M0 0h8.5L4.25 4.6z" fill="#000"/></svg>
<svg style="left:1661px;top:333px" width="6" height="6" viewBox="0 0 6 6"><path d="M0 0h6v6z" fill="#e53935"/></svg>
<div class="t" style="left:43.7px;top:359.89px;font-size:13.6px;color:#000;font-weight:normal;letter-spacing:0.35px;">Williams</div>
<div class="t" style="left:204.7px;top:359.89px;font-size:13.6px;color:#000;font-weight:normal;letter-spacing:0.35px;">Joel</div>
<div class="t" style="left:178px;width:600px;text-align:center;top:362.60px;font-size:10.4px;color:#000;font-weight:normal;letter-spacing:1.2px;-webkit-text-stroke:0.2px #000;">03/22/1994</div>
<div class="t" style="left:365.5px;width:600px;text-align:center;top:362.24px;font-size:12px;color:#000;font-weight:normal;">AETNA</div>
<div class="t" style="left:550px;width:600px;text-align:center;top:362.24px;font-size:12px;color:#000;font-weight:normal;">AET12536521457</div>
<div class="t" style="left:709px;width:600px;text-align:center;top:362.60px;font-size:10.4px;color:#000;font-weight:normal;letter-spacing:1.2px;-webkit-text-stroke:0.2px #000;">7/29/2024</div>
<div class="t" style="left:851px;width:600px;text-align:center;top:362.24px;font-size:12px;color:#000;font-weight:normal;">DR. ANA REYES</div>
<div class="t" style="left:1228px;top:362.24px;font-size:12px;color:#000;font-weight:normal;">Abdominal Pain</div>
<div class="r" style="left:1408px;top:360.2px;width:250px;height:14.4px;background:#e8eaed;border-radius:7.2px;"></div>
<div class="t" style="left:1414px;top:362.24px;font-size:12px;color:#000;font-weight:normal;">Physical Therapy Session(CPT CODE: ...</div>
<svg style="left:1644.3px;top:365.4px" width="8.5" height="4.6" viewBox="0 0 8.5 4.6"><path d="M0 0h8.5L4.25 4.6z" fill="#000"/></svg>
<div class="t" style="left:43.7px;top:381.89px;font-size:13.6px;color:#000;font-weight:normal;letter-spacing:0.35px;">White</div>
<div class="t" style="left:204.7px;top:381.89px;font-size:13.6px;color:#000;font-weight:normal;letter-spacing:0.35px;">Elelasil</div>
<div class="t" style="left:178px;width:600px;text-align:center;top:384.60px;font-size:10.4px;color:#000;font-weight:normal;letter-spacing:1.2px;-webkit-text-stroke:0.2px #000;">09/22/1988</div>
<div class="t" style="left:365.5px;width:600px;text-align:center;top:384.24px;font-size:12px;color:#000;font-weight:normal;">AETNA</div>
<div class="t" style="left:550px;width:600px;text-align:center;top:384.24px;font-size:12px;color:#000;font-weight:normal;">AET12536521458</div>
<div class="t" style="left:709px;width:600px;text-align:center;top:384.60px;font-size:10.4px;color:#000;font-weight:normal;letter-spacing:1.2px;-webkit-text-stroke:0.2px #000;">7/30/2024</div>
<div class="t" style="left:851px;width:600px;text-align:center;top:384.24px;font-size:12px;color:#000;font-weight:normal;">DR. ANA REYES</div>
<div class="t" style="left:1228px;top:384.24px;font-size:12px;color:#000;font-weight:normal;">Fever</div>
<div class="r" style="left:1408px;top:382.2px;width:250px;height:14.4px;background:#e8eaed;border-radius:7.2px;"></div>
<div class="t" style="left:1414px;top:384.24px;font-size:12px;color:#000;font-weight:normal;">Evaluation and Managemnte CPT COD...</div>
<svg style="left:1644.3px;top:387.4px" width="8.5" height="4.6" viewBox="0 0 8.5 4.6"><path d="M0 0h8.5L4.25 4.6z" fill="#000"/></svg>
<svg style="left:1661px;top:377px" width="6" height="6" viewBox="0 0 6 6"><path d="M0 0h6v6z" fill="#e53935"/></svg>
<div class="t" style="left:43.7px;top:403.89px;font-size:13.6px;color:#000;font-weight:normal;letter-spacing:0.35px;">Martin</div>
<div class="t" style="left:204.7px;top:403.89px;font-size:13.6px;color:#000;font-weight:normal;letter-spacing:0.35px;">Renato</div>
<div class="t" style="left:178px;width:600px;text-align:center;top:406.60px;font-size:10.4px;color:#000;font-weight:normal;letter-spacing:1.2px;-webkit-text-stroke:0.2px #000;">03/05/1993</div>
<div class="t" style="left:365.5px;width:600px;text-align:center;top:406.24px;font-size:12px;color:#000;font-weight:normal;">AETNA</div>
<div class="t" style="left:550px;width:600px;text-align:center;top:406.24px;font-size:12px;color:#000;font-weight:normal;">AET12536521459</div>
<div class="t" style="left:709px;width:600px;text-align:center;top:406.60px;font-size:10.4px;color:#000;font-weight:normal;letter-spacing:1.2px;-webkit-text-stroke:0.2px #000;">7/31/2024</div>
<div class="t" style="left:851px;width:600px;text-align:center;top:406.24px;font-size:12px;color:#000;font-weight:normal;">DR. ANA REYES</div>
<div class="t" style="left:1228px;top:406.24px;font-size:12px;color:#000;font-weight:normal;">Body Malaise</div>
<div class="r" style="left:1408px;top:404.2px;width:250px;height:14.4px;background:#e8eaed;border-radius:7.2px;"></div>
<div class="t" style="left:1414px;top:406.24px;font-size:12px;color:#000;font-weight:normal;">Physical Therapy Session(CPT CODE: ...</div>
<svg style="left:1644.3px;top:409.4px" width="8.5" height="4.6" viewBox="0 0 8.5 4.6"><path d="M0 0h8.5L4.25 4.6z" fill="#000"/></svg>
<div class="t" style="left:43.7px;top:425.89px;font-size:13.6px;color:#000;font-weight:normal;letter-spacing:0.35px;">Anderson</div>
<div class="t" style="left:204.7px;top:425.89px;font-size:13.6px;color:#000;font-weight:normal;letter-spacing:0.35px;">Jaylyn</div>
<div class="t" style="left:178px;width:600px;text-align:center;top:428.60px;font-size:10.4px;color:#000;font-weight:normal;letter-spacing:1.2px;-webkit-text-stroke:0.2px #000;">11/14/1990</div>
<div class="t" style="left:365.5px;width:600px;text-align:center;top:428.24px;font-size:12px;color:#000;font-weight:normal;">AETNA</div>
<div class="t" style="left:550px;width:600px;text-align:center;top:428.24px;font-size:12px;color:#000;font-weight:normal;">AET12536521460</div>
<div class="t" style="left:709px;width:600px;text-align:center;top:428.60px;font-size:10.4px;color:#000;font-weight:normal;letter-spacing:1.2px;-webkit-text-stroke:0.2px #000;">8/1/2024</div>
<div class="t" style="left:851px;width:600px;text-align:center;top:428.24px;font-size:12px;color:#000;font-weight:normal;">DR. ANA REYES</div>
<div class="t" style="left:1228px;top:428.24px;font-size:12px;color:#000;font-weight:normal;">Joint Pain</div>
<div class="r" style="left:1408px;top:426.2px;width:250px;height:14.4px;background:#e8eaed;border-radius:7.2px;"></div>
<div class="t" style="left:1414px;top:428.24px;font-size:12px;color:#000;font-weight:normal;">Physical Therapy Session(CPT CODE: ...</div>
<svg style="left:1644.3px;top:431.4px" width="8.5" height="4.6" viewBox="0 0 8.5 4.6"><path d="M0 0h8.5L4.25 4.6z" fill="#000"/></svg>
<div class="t" style="left:43.7px;top:447.89px;font-size:13.6px;color:#000;font-weight:normal;letter-spacing:0.35px;">Thompson</div>
<div class="t" style="left:204.7px;top:447.89px;font-size:13.6px;color:#000;font-weight:normal;letter-spacing:0.35px;">Roxan</div>
<div class="t" style="left:178px;width:600px;text-align:center;top:450.60px;font-size:10.4px;color:#000;font-weight:normal;letter-spacing:1.2px;-webkit-text-stroke:0.2px #000;">08/08/1986</div>
<div class="t" style="left:365.5px;width:600px;text-align:center;top:450.24px;font-size:12px;color:#000;font-weight:normal;">AETNA</div>
<div class="t" style="left:550px;width:600px;text-align:center;top:450.24px;font-size:12px;color:#000;font-weight:normal;">AET12536521461</div>
<div class="t" style="left:709px;width:600px;text-align:center;top:450.60px;font-size:10.4px;color:#000;font-weight:normal;letter-spacing:1.2px;-webkit-text-stroke:0.2px #000;">8/2/2024</div>
<div class="t" style="left:851px;width:600px;text-align:center;top:450.24px;font-size:12px;color:#000;font-weight:normal;">DR. ANA REYES</div>
<div class="t" style="left:1228px;top:450.24px;font-size:12px;color:#000;font-weight:normal;">Back Pain</div>
<div class="r" style="left:1408px;top:448.2px;width:250px;height:14.4px;background:#e8eaed;border-radius:7.2px;"></div>
<div class="t" style="left:1414px;top:450.24px;font-size:12px;color:#000;font-weight:normal;">Evaluation and Managemnte CPT COD...</div>
<svg style="left:1644.3px;top:453.4px" width="8.5" height="4.6" viewBox="0 0 8.5 4.6"><path d="M0 0h8.5L4.25 4.6z" fill="#000"/></svg>
<svg style="left:1661px;top:443px" width="6" height="6" viewBox="0 0 6 6"><path d="M0 0h6v6z" fill="#e53935"/></svg>
<div class="t" style="left:43.7px;top:469.89px;font-size:13.6px;color:#000;font-weight:normal;letter-spacing:0.35px;">Thomas</div>
<div class="t" style="left:204.7px;top:469.89px;font-size:13.6px;color:#000;font-weight:normal;letter-spacing:0.35px;">Jose</div>
<div class="t" style="left:178px;width:600px;text-align:center;top:472.60px;font-size:10.4px;color:#000;font-weight:normal;letter-spacing:1.2px;-webkit-text-stroke:0.2px #000;">08/10/1990</div>
<div class="t" style="left:365.5px;width:600px;text-align:center;top:472.24px;font-size:12px;color:#000;font-weight:normal;">AETNA</div>
<div class="t" style="left:550px;width:600px;text-align:center;top:472.24px;font-size:12px;color:#000;font-weight:normal;">AET12536521462</div>
<div class="t" style="left:709px;width:600px;text-align:center;top:472.60px;font-size:10.4px;color:#000;font-weight:normal;letter-spacing:1.2px;-webkit-text-stroke:0.2px #000;">8/3/2024</div>
<div class="t" style="left:851px;width:600px;text-align:center;top:472.24px;font-size:12px;color:#000;font-weight:normal;">DR. ANA REYES</div>
<div class="t" style="left:1228px;top:472.24px;font-size:12px;color:#000;font-weight:normal;">Chronic Back Pain</div>
<div class="r" style="left:1408px;top:470.2px;width:250px;height:14.4px;background:#e8eaed;border-radius:7.2px;"></div>
<div class="t" style="left:1414px;top:472.24px;font-size:12px;color:#000;font-weight:normal;">Evaluation and Managemnte CPT COD...</div>
<svg style="left:1644.3px;top:475.4px" width="8.5" height="4.6" viewBox="0 0 8.5 4.6"><path d="M0 0h8.5L4.25 4.6z" fill="#000"/></svg>
<svg style="left:1661px;top:465px" width="6" height="6" viewBox="0 0 6 6"><path d="M0 0h6v6z" fill="#e53935"/></svg>
<div class="t" style="left:43.7px;top:491.89px;font-size:13.6px;color:#000;font-weight:normal;letter-spacing:0.35px;">Nguyen</div>
<div class="t" style="left:204.7px;top:491.89px;font-size:13.6px;color:#000;font-weight:normal;letter-spacing:0.35px;">Lorena</div>
<div class="t" style="left:178px;width:600px;text-align:center;top:494.60px;font-size:10.4px;color:#000;font-weight:normal;letter-spacing:1.2px;-webkit-text-stroke:0.2px #000;">3/30/1992</div>
<div class="t" style="left:365.5px;width:600px;text-align:center;top:494.24px;font-size:12px;color:#000;font-weight:normal;">AETNA</div>
<div class="t" style="left:550px;width:600px;text-align:center;top:494.24px;font-size:12px;color:#000;font-weight:normal;">AET12536521463</div>
<div class="t" style="left:709px;width:600px;text-align:center;top:494.60px;font-size:10.4px;color:#000;font-weight:normal;letter-spacing:1.2px;-webkit-text-stroke:0.2px #000;">8/4/2024</div>
<div class="t" style="left:851px;width:600px;text-align:center;top:494.24px;font-size:12px;color:#000;font-weight:normal;">DR. ANA REYES</div>
<div class="t" style="left:1228px;top:494.24px;font-size:12px;color:#000;font-weight:normal;">Chest Pain</div>
<div class="r" style="left:1408px;top:492.2px;width:250px;height:14.4px;background:#e8eaed;border-radius:7.2px;"></div>
<div class="t" style="left:1414px;top:494.24px;font-size:12px;color:#000;font-weight:normal;">Evaluation and Managemnte CPT COD...</div>
<svg style="left:1644.3px;top:497.4px" width="8.5" height="4.6" viewBox="0 0 8.5 4.6"><path d="M0 0h8.5L4.25 4.6z" fill="#000"/></svg>
<svg style="left:1661px;top:487px" width="6" height="6" viewBox="0 0 6 6"><path d="M0 0h6v6z" fill="#e53935"/></svg>
<div class="t" style="left:43.7px;top:513.89px;font-size:13.6px;color:#000;font-weight:normal;letter-spacing:0.35px;">Tayloy</div>
<div class="t" style="left:204.7px;top:513.89px;font-size:13.6px;color:#000;font-weight:normal;letter-spacing:0.35px;">Dale</div>
<div class="t" style="left:178px;width:600px;text-align:center;top:516.60px;font-size:10.4px;color:#000;font-weight:normal;letter-spacing:1.2px;-webkit-text-stroke:0.2px #000;">01/05/1993</div>
<div class="t" style="left:365.5px;width:600px;text-align:center;top:516.24px;font-size:12px;color:#000;font-weight:normal;">AETNA</div>
<div class="t" style="left:550px;width:600px;text-align:center;top:516.24px;font-size:12px;color:#000;font-weight:normal;">AET12536521464</div>
<div class="t" style="left:709px;width:600px;text-align:center;top:516.60px;font-size:10.4px;color:#000;font-weight:normal;letter-spacing:1.2px;-webkit-text-stroke:0.2px #000;">8/5/2024</div>
<div class="t" style="left:851px;width:600px;text-align:center;top:516.24px;font-size:12px;color:#000;font-weight:normal;">DR. ANA REYES</div>
<div class="t" style="left:1228px;top:516.24px;font-size:12px;color:#000;font-weight:normal;">Painful Urination</div>
<div class="r" style="left:1408px;top:514.2px;width:250px;height:14.4px;background:#e8eaed;border-radius:7.2px;"></div>
<div class="t" style="left:1414px;top:516.24px;font-size:12px;color:#000;font-weight:normal;">Evaluation and Managemnte CPT COD...</div>
<svg style="left:1644.3px;top:519.4px" width="8.5" height="4.6" viewBox="0 0 8.5 4.6"><path d="M0 0h8.5L4.25 4.6z" fill="#000"/></svg>
<svg style="left:1661px;top:509px" width="6" height="6" viewBox="0 0 6 6"><path d="M0 0h6v6z" fill="#e53935"/></svg>
<div class="t" style="left:43.7px;top:535.89px;font-size:13.6px;color:#000;font-weight:normal;letter-spacing:0.35px;">Jay</div>
<div class="t" style="left:204.7px;top:535.89px;font-size:13.6px;color:#000;font-weight:normal;letter-spacing:0.35px;">Argyll</div>
<div class="t" style="left:178px;width:600px;text-align:center;top:538.60px;font-size:10.4px;color:#000;font-weight:normal;letter-spacing:1.2px;-webkit-text-stroke:0.2px #000;">25/03/1996</div>
<div class="t" style="left:365.5px;width:600px;text-align:center;top:538.24px;font-size:12px;color:#000;font-weight:normal;">AETNA</div>
<div class="t" style="left:550px;width:600px;text-align:center;top:538.24px;font-size:12px;color:#000;font-weight:normal;">AET12536521465</div>
<div class="t" style="left:709px;width:600px;text-align:center;top:538.60px;font-size:10.4px;color:#000;font-weight:normal;letter-spacing:1.2px;-webkit-text-stroke:0.2px #000;">8/6/2024</div>
<div class="t" style="left:851px;width:600px;text-align:center;top:538.24px;font-size:12px;color:#000;font-weight:normal;">DR. ANA REYES</div>
<div class="t" style="left:1228px;top:538.24px;font-size:12px;color:#000;font-weight:normal;">Fatigue</div>
<div class="r" style="left:1408px;top:536.2px;width:250px;height:14.4px;background:#e8eaed;border-radius:7.2px;"></div>
<div class="t" style="left:1414px;top:538.24px;font-size:12px;color:#000;font-weight:normal;">Evaluation and Managemnte CPT COD...</div>
<svg style="left:1644.3px;top:541.4px" width="8.5" height="4.6" viewBox="0 0 8.5 4.6"><path d="M0 0h8.5L4.25 4.6z" fill="#000"/></svg>
<svg style="left:1661px;top:531px" width="6" height="6" viewBox="0 0 6 6"><path d="M0 0h6v6z" fill="#e53935"/></svg>
<div class="t" style="left:43.7px;top:557.89px;font-size:13.6px;color:#000;font-weight:normal;letter-spacing:0.35px;">Chris</div>
<div class="t" style="left:204.7px;top:557.89px;font-size:13.6px;color:#000;font-weight:normal;letter-spacing:0.35px;">Leo</div>
<div class="t" style="left:178px;width:600px;text-align:center;top:560.60px;font-size:10.4px;color:#000;font-weight:normal;letter-spacing:1.2px;-webkit-text-stroke:0.2px #000;">06/02/1981</div>
<div class="t" style="left:365.5px;width:600px;text-align:center;top:560.24px;font-size:12px;color:#000;font-weight:normal;">AETNA</div>
<div class="t" style="left:550px;width:600px;text-align:center;top:560.24px;font-size:12px;color:#000;font-weight:normal;">AET12536521466</div>
<div class="t" style="left:709px;width:600px;text-align:center;top:560.60px;font-size:10.4px;color:#000;font-weight:normal;letter-spacing:1.2px;-webkit-text-stroke:0.2px #000;">8/7/2024</div>
<div class="t" style="left:851px;width:600px;text-align:center;top:560.24px;font-size:12px;color:#000;font-weight:normal;">DR. ANA REYES</div>
<div class="t" style="left:1228px;top:560.24px;font-size:12px;color:#000;font-weight:normal;">High Blood Pressure</div>
<div class="r" style="left:1408px;top:558.2px;width:250px;height:14.4px;background:#e8eaed;border-radius:7.2px;"></div>
<div class="t" style="left:1414px;top:560.24px;font-size:12px;color:#000;font-weight:normal;">Physical Therapy Session(CPT CODE: ...</div>
<svg style="left:1644.3px;top:563.4px" width="8.5" height="4.6" viewBox="0 0 8.5 4.6"><path d="M0 0h8.5L4.25 4.6z" fill="#000"/></svg>
<div class="t" style="left:43.7px;top:579.89px;font-size:13.6px;color:#000;font-weight:normal;letter-spacing:0.35px;">Angelo</div>
<div class="t" style="left:204.7px;top:579.89px;font-size:13.6px;color:#000;font-weight:normal;letter-spacing:0.35px;">Ralph</div>
<div class="t" style="left:178px;width:600px;text-align:center;top:582.60px;font-size:10.4px;color:#000;font-weight:normal;letter-spacing:1.2px;-webkit-text-stroke:0.2px #000;">05/02/1985</div>
<div class="t" style="left:365.5px;width:600px;text-align:center;top:582.24px;font-size:12px;color:#000;font-weight:normal;">AETNA</div>
<div class="t" style="left:550px;width:600px;text-align:center;top:582.24px;font-size:12px;color:#000;font-weight:normal;">AET12536521467</div>
<div class="t" style="left:709px;width:600px;text-align:center;top:582.60px;font-size:10.4px;color:#000;font-weight:normal;letter-spacing:1.2px;-webkit-text-stroke:0.2px #000;">8/8/2024</div>
<div class="t" style="left:851px;width:600px;text-align:center;top:582.24px;font-size:12px;color:#000;font-weight:normal;">DR. ANA REYES</div>
<div class="t" style="left:1228px;top:582.24px;font-size:12px;color:#000;font-weight:normal;">Abdominal Pain</div>
<div class="r" style="left:1408px;top:580.2px;width:250px;height:14.4px;background:#e8eaed;border-radius:7.2px;"></div>
<div class="t" style="left:1414px;top:582.24px;font-size:12px;color:#000;font-weight:normal;">Evaluation and Managemnte CPT COD...</div>
<svg style="left:1644.3px;top:585.4px" width="8.5" height="4.6" viewBox="0 0 8.5 4.6"><path d="M0 0h8.5L4.25 4.6z" fill="#000"/></svg>
<svg style="left:1661px;top:575px" width="6" height="6" viewBox="0 0 6 6"><path d="M0 0h6v6z" fill="#e53935"/></svg>
<div class="t" style="left:43.7px;top:601.89px;font-size:13.6px;color:#000;font-weight:normal;letter-spacing:0.35px;">Mith</div>
<div class="t" style="left:204.7px;top:601.89px;font-size:13.6px;color:#000;font-weight:normal;letter-spacing:0.35px;">Raylyn</div>
<div class="t" style="left:178px;width:600px;text-align:center;top:604.60px;font-size:10.4px;color:#000;font-weight:normal;letter-spacing:1.2px;-webkit-text-stroke:0.2px #000;">10/24/1985</div>
<div class="t" style="left:365.5px;width:600px;text-align:center;top:604.24px;font-size:12px;color:#000;font-weight:normal;">AETNA</div>
<div class="t" style="left:550px;width:600px;text-align:center;top:604.24px;font-size:12px;color:#000;font-weight:normal;">AET12536521468</div>
<div class="t" style="left:709px;width:600px;text-align:center;top:604.60px;font-size:10.4px;color:#000;font-weight:normal;letter-spacing:1.2px;-webkit-text-stroke:0.2px #000;">8/9/2024</div>
<div class="t" style="left:851px;width:600px;text-align:center;top:604.24px;font-size:12px;color:#000;font-weight:normal;">DR. ANA REYES</div>
<div class="t" style="left:1228px;top:604.24px;font-size:12px;color:#000;font-weight:normal;">Fever</div>
<div class="r" style="left:1408px;top:602.2px;width:250px;height:14.4px;background:#e8eaed;border-radius:7.2px;"></div>
<div class="t" style="left:1414px;top:604.24px;font-size:12px;color:#000;font-weight:normal;">Physical Therapy Session(CPT CODE: ...</div>
<svg style="left:1644.3px;top:607.4px" width="8.5" height="4.6" viewBox="0 0 8.5 4.6"><path d="M0 0h8.5L4.25 4.6z" fill="#000"/></svg>
<div class="t" style="left:43.7px;top:623.89px;font-size:13.6px;color:#000;font-weight:normal;letter-spacing:0.35px;">Floyd</div>
<div class="t" style="left:204.7px;top:623.89px;font-size:13.6px;color:#000;font-weight:normal;letter-spacing:0.35px;">Harie</div>
<div class="t" style="left:178px;width:600px;text-align:center;top:626.60px;font-size:10.4px;color:#000;font-weight:normal;letter-spacing:1.2px;-webkit-text-stroke:0.2px #000;">06/23/1990</div>
<div class="t" style="left:365.5px;width:600px;text-align:center;top:626.24px;font-size:12px;color:#000;font-weight:normal;">AETNA</div>
<div class="t" style="left:550px;width:600px;text-align:center;top:626.24px;font-size:12px;color:#000;font-weight:normal;">AET12536521469</div>
<div class="t" style="left:709px;width:600px;text-align:center;top:626.60px;font-size:10.4px;color:#000;font-weight:normal;letter-spacing:1.2px;-webkit-text-stroke:0.2px #000;">8/10/2024</div>
<div class="t" style="left:851px;width:600px;text-align:center;top:626.24px;font-size:12px;color:#000;font-weight:normal;">DR. ANA REYES</div>
<div class="t" style="left:1228px;top:626.24px;font-size:12px;color:#000;font-weight:normal;">Body Malaise</div>
<div class="r" style="left:1408px;top:624.2px;width:250px;height:14.4px;background:#e8eaed;border-radius:7.2px;"></div>
<div class="t" style="left:1414px;top:626.24px;font-size:12px;color:#000;font-weight:normal;">Evaluation and Managemnte CPT COD...</div>
<svg style="left:1644.3px;top:629.4px" width="8.5" height="4.6" viewBox="0 0 8.5 4.6"><path d="M0 0h8.5L4.25 4.6z" fill="#000"/></svg>
<svg style="left:1661px;top:619px" width="6" height="6" viewBox="0 0 6 6"><path d="M0 0h6v6z" fill="#e53935"/></svg>
<div class="t" style="left:43.7px;top:645.89px;font-size:13.6px;color:#000;font-weight:normal;letter-spacing:0.35px;">Gil</div>
<div class="t" style="left:204.7px;top:645.89px;font-size:13.6px;color:#000;font-weight:normal;letter-spacing:0.35px;">Mark</div>
<div class="t" style="left:178px;width:600px;text-align:center;top:648.60px;font-size:10.4px;color:#000;font-weight:normal;letter-spacing:1.2px;-webkit-text-stroke:0.2px #000;">08/07/1991</div>
<div class="t" style="left:365.5px;width:600px;text-align:center;top:648.24px;font-size:12px;color:#000;font-weight:normal;">AETNA</div>
<div class="t" style="left:550px;width:600px;text-align:center;top:648.24px;font-size:12px;color:#000;font-weight:normal;">AET12536521470</div>
<div class="t" style="left:709px;width:600px;text-align:center;top:648.60px;font-size:10.4px;color:#000;font-weight:normal;letter-spacing:1.2px;-webkit-text-stroke:0.2px #000;">8/11/2024</div>
<div class="t" style="left:851px;width:600px;text-align:center;top:648.24px;font-size:12px;color:#000;font-weight:normal;">DR. ANA REYES</div>
<div class="t" style="left:1228px;top:648.24px;font-size:12px;color:#000;font-weight:normal;">Joint Pain</div>
<div class="r" style="left:1408px;top:646.2px;width:250px;height:14.4px;background:#e8eaed;border-radius:7.2px;"></div>
<div class="t" style="left:1414px;top:648.24px;font-size:12px;color:#000;font-weight:normal;">Evaluation and Managemnte CPT COD...</div>
<svg style="left:1644.3px;top:651.4px" width="8.5" height="4.6" viewBox="0 0 8.5 4.6"><path d="M0 0h8.5L4.25 4.6z" fill="#000"/></svg>
<svg style="left:1661px;top:641px" width="6" height="6" viewBox="0 0 6 6"><path d="M0 0h6v6z" fill="#e53935"/></svg>
<div class="t" style="left:43.7px;top:667.89px;font-size:13.6px;color:#000;font-weight:normal;letter-spacing:0.35px;">Jay</div>
<div class="t" style="left:204.7px;top:667.89px;font-size:13.6px;color:#000;font-weight:normal;letter-spacing:0.35px;">Edward</div>
<div class="t" style="left:178px;width:600px;text-align:center;top:670.60px;font-size:10.4px;color:#000;font-weight:normal;letter-spacing:1.2px;-webkit-text-stroke:0.2px #000;">10/10/1986</div>
<div class="t" style="left:365.5px;width:600px;text-align:center;top:670.24px;font-size:12px;color:#000;font-weight:normal;">AETNA</div>
<div class="t" style="left:550px;width:600px;text-align:center;top:670.24px;font-size:12px;color:#000;font-weight:normal;">AET12536521471</div>
<div class="t" style="left:709px;width:600px;text-align:center;top:670.60px;font-size:10.4px;color:#000;font-weight:normal;letter-spacing:1.2px;-webkit-text-stroke:0.2px #000;">8/12/2024</div>
<div class="t" style="left:851px;width:600px;text-align:center;top:670.24px;font-size:12px;color:#000;font-weight:normal;">DR. ANA REYES</div>
<div class="t" style="left:1228px;top:670.24px;font-size:12px;color:#000;font-weight:normal;">Back Pain</div>
<div class="r" style="left:1408px;top:668.2px;width:250px;height:14.4px;background:#e8eaed;border-radius:7.2px;"></div>
<div class="t" style="left:1414px;top:670.24px;font-size:12px;color:#000;font-weight:normal;">Evaluation and Managemnte CPT COD...</div>
<svg style="left:1644.3px;top:673.4px" width="8.5" height="4.6" viewBox="0 0 8.5 4.6"><path d="M0 0h8.5L4.25 4.6z" fill="#000"/></svg>
<svg style="left:1661px;top:663px" width="6" height="6" viewBox="0 0 6 6"><path d="M0 0h6v6z" fill="#e53935"/></svg>
<div class="t" style="left:43.7px;top:689.89px;font-size:13.6px;color:#000;font-weight:normal;letter-spacing:0.35px;">John</div>
<div class="t" style="left:204.7px;top:689.89px;font-size:13.6px;color:#000;font-weight:normal;letter-spacing:0.35px;">Dale</div>
<div class="t" style="left:178px;width:600px;text-align:center;top:692.60px;font-size:10.4px;color:#000;font-weight:normal;letter-spacing:1.2px;-webkit-text-stroke:0.2px #000;">08/29/1988</div>
<div class="t" style="left:365.5px;width:600px;text-align:center;top:692.24px;font-size:12px;color:#000;font-weight:normal;">AETNA</div>
<div class="t" style="left:550px;width:600px;text-align:center;top:692.24px;font-size:12px;color:#000;font-weight:normal;">AET12536521472</div>
<div class="t" style="left:709px;width:600px;text-align:center;top:692.60px;font-size:10.4px;color:#000;font-weight:normal;letter-spacing:1.2px;-webkit-text-stroke:0.2px #000;">8/13/2024</div>
<div class="t" style="left:851px;width:600px;text-align:center;top:692.24px;font-size:12px;color:#000;font-weight:normal;">DR. ANA REYES</div>
<div class="t" style="left:1228px;top:692.24px;font-size:12px;color:#000;font-weight:normal;">Chronic Back Pain</div>
<div class="r" style="left:1408px;top:690.2px;width:250px;height:14.4px;background:#e8eaed;border-radius:7.2px;"></div>
<div class="t" style="left:1414px;top:692.24px;font-size:12px;color:#000;font-weight:normal;">Physical Therapy Session(CPT CODE: ...</div>
<svg style="left:1644.3px;top:695.4px" width="8.5" height="4.6" viewBox="0 0 8.5 4.6"><path d="M0 0h8.5L4.25 4.6z" fill="#000"/></svg>
<div class="t" style="left:43.7px;top:711.89px;font-size:13.6px;color:#000;font-weight:normal;letter-spacing:0.35px;">Johnson</div>
<div class="t" style="left:204.7px;top:711.89px;font-size:13.6px;color:#000;font-weight:normal;letter-spacing:0.35px;">Mark</div>
<div class="t" style="left:178px;width:600px;text-align:center;top:714.60px;font-size:10.4px;color:#000;font-weight:normal;letter-spacing:1.2px;-webkit-text-stroke:0.2px #000;">11/16/1989</div>
<div class="t" style="left:365.5px;width:600px;text-align:center;top:714.24px;font-size:12px;color:#000;font-weight:normal;">AETNA</div>
<div class="t" style="left:550px;width:600px;text-align:center;top:714.24px;font-size:12px;color:#000;font-weight:normal;">AET12536521473</div>
<div class="t" style="left:709px;width:600px;text-align:center;top:714.60px;font-size:10.4px;color:#000;font-weight:normal;letter-spacing:1.2px;-webkit-text-stroke:0.2px #000;">8/14/2024</div>
<div class="t" style="left:851px;width:600px;text-align:center;top:714.24px;font-size:12px;color:#000;font-weight:normal;">DR. ANA REYES</div>
<div class="t" style="left:1228px;top:714.24px;font-size:12px;color:#000;font-weight:normal;">Chest Pain</div>
<div class="r" style="left:1408px;top:712.2px;width:250px;height:14.4px;background:#e8eaed;border-radius:7.2px;"></div>
<div class="t" style="left:1414px;top:714.24px;font-size:12px;color:#000;font-weight:normal;">Evaluation and Managemnte CPT COD...</div>
<svg style="left:1644.3px;top:717.4px" width="8.5" height="4.6" viewBox="0 0 8.5 4.6"><path d="M0 0h8.5L4.25 4.6z" fill="#000"/></svg>
<svg style="left:1661px;top:707px" width="6" height="6" viewBox="0 0 6 6"><path d="M0 0h6v6z" fill="#e53935"/></svg>
<div class="t" style="left:43.7px;top:733.89px;font-size:13.6px;color:#000;font-weight:normal;letter-spacing:0.35px;">Allen</div>
<div class="t" style="left:204.7px;top:733.89px;font-size:13.6px;color:#000;font-weight:normal;letter-spacing:0.35px;">Ivan</div>
<div class="t" style="left:178px;width:600px;text-align:center;top:736.60px;font-size:10.4px;color:#000;font-weight:normal;letter-spacing:1.2px;-webkit-text-stroke:0.2px #000;">11/25/1995</div>
<div class="t" style="left:365.5px;width:600px;text-align:center;top:736.24px;font-size:12px;color:#000;font-weight:normal;">AETNA</div>
<div class="t" style="left:550px;width:600px;text-align:center;top:736.24px;font-size:12px;color:#000;font-weight:normal;">AET12536521474</div>
<div class="t" style="left:709px;width:600px;text-align:center;top:736.60px;font-size:10.4px;color:#000;font-weight:normal;letter-spacing:1.2px;-webkit-text-stroke:0.2px #000;">8/15/2024</div>
<div class="t" style="left:851px;width:600px;text-align:center;top:736.24px;font-size:12px;color:#000;font-weight:normal;">DR. ANA REYES</div>
<div class="t" style="left:1228px;top:736.24px;font-size:12px;color:#000;font-weight:normal;">Painful Urination</div>
<div class="r" style="left:1408px;top:734.2px;width:250px;height:14.4px;background:#e8eaed;border-radius:7.2px;"></div>
<div class="t" style="left:1414px;top:736.24px;font-size:12px;color:#000;font-weight:normal;">Physical Therapy Session(CPT CODE: ...</div>
<svg style="left:1644.3px;top:739.4px" width="8.5" height="4.6" viewBox="0 0 8.5 4.6"><path d="M0 0h8.5L4.25 4.6z" fill="#000"/></svg>
<div class="t" style="left:43.7px;top:755.89px;font-size:13.6px;color:#000;font-weight:normal;letter-spacing:0.35px;">Clark</div>
<div class="t" style="left:204.7px;top:755.89px;font-size:13.6px;color:#000;font-weight:normal;letter-spacing:0.35px;">Vicson</div>
<div class="t" style="left:178px;width:600px;text-align:center;top:758.60px;font-size:10.4px;color:#000;font-weight:normal;letter-spacing:1.2px;-webkit-text-stroke:0.2px #000;">05/03/1991</div>
<div class="t" style="left:365.5px;width:600px;text-align:center;top:758.24px;font-size:12px;color:#000;font-weight:normal;">AETNA</div>
<div class="t" style="left:550px;width:600px;text-align:center;top:758.24px;font-size:12px;color:#000;font-weight:normal;">AET12536521475</div>
<div class="t" style="left:709px;width:600px;text-align:center;top:758.60px;font-size:10.4px;color:#000;font-weight:normal;letter-spacing:1.2px;-webkit-text-stroke:0.2px #000;">8/16/2024</div>
<div class="t" style="left:851px;width:600px;text-align:center;top:758.24px;font-size:12px;color:#000;font-weight:normal;">DR. ANA REYES</div>
<div class="t" style="left:1228px;top:758.24px;font-size:12px;color:#000;font-weight:normal;">Fatigue</div>
<div class="r" style="left:1408px;top:756.2px;width:250px;height:14.4px;background:#e8eaed;border-radius:7.2px;"></div>
<div class="t" style="left:1414px;top:758.24px;font-size:12px;color:#000;font-weight:normal;">Evaluation and Managemnte CPT COD...</div>
<svg style="left:1644.3px;top:761.4px" width="8.5" height="4.6" viewBox="0 0 8.5 4.6"><path d="M0 0h8.5L4.25 4.6z" fill="#000"/></svg>
<svg style="left:1661px;top:751px" width="6" height="6" viewBox="0 0 6 6"><path d="M0 0h6v6z" fill="#e53935"/></svg>
<div class="t" style="left:43.7px;top:777.89px;font-size:13.6px;color:#000;font-weight:normal;letter-spacing:0.35px;">Brian</div>
<div class="t" style="left:204.7px;top:777.89px;font-size:13.6px;color:#000;font-weight:normal;letter-spacing:0.35px;">Jay</div>
<div class="t" style="left:178px;width:600px;text-align:center;top:780.60px;font-size:10.4px;color:#000;font-weight:normal;letter-spacing:1.2px;-webkit-text-stroke:0.2px #000;">02/20/1990</div>
<div class="t" style="left:365.5px;width:600px;text-align:center;top:780.24px;font-size:12px;color:#000;font-weight:normal;">AETNA</div>
<div class="t" style="left:550px;width:600px;text-align:center;top:780.24px;font-size:12px;color:#000;font-weight:normal;">AET12536521476</div>
<div class="t" style="left:709px;width:600px;text-align:center;top:780.60px;font-size:10.4px;color:#000;font-weight:normal;letter-spacing:1.2px;-webkit-text-stroke:0.2px #000;">8/17/2024</div>
<div class="t" style="left:851px;width:600px;text-align:center;top:780.24px;font-size:12px;color:#000;font-weight:normal;">DR. ANA REYES</div>
<div class="t" style="left:1228px;top:780.24px;font-size:12px;color:#000;font-weight:normal;">High Blood Pressure</div>
<div class="r" style="left:1408px;top:778.2px;width:250px;height:14.4px;background:#e8eaed;border-radius:7.2px;"></div>
<div class="t" style="left:1414px;top:780.24px;font-size:12px;color:#000;font-weight:normal;">Physical Therapy Session(CPT CODE: ...</div>
<svg style="left:1644.3px;top:783.4px" width="8.5" height="4.6" viewBox="0 0 8.5 4.6"><path d="M0 0h8.5L4.25 4.6z" fill="#000"/></svg>
<div class="t" style="left:43.7px;top:799.89px;font-size:13.6px;color:#000;font-weight:normal;letter-spacing:0.35px;">Scott</div>
<div class="t" style="left:204.7px;top:799.89px;font-size:13.6px;color:#000;font-weight:normal;letter-spacing:0.35px;">Clyde</div>
<div class="t" style="left:178px;width:600px;text-align:center;top:802.60px;font-size:10.4px;color:#000;font-weight:normal;letter-spacing:1.2px;-webkit-text-stroke:0.2px #000;">04/07/1987</div>
<div class="t" style="left:365.5px;width:600px;text-align:center;top:802.24px;font-size:12px;color:#000;font-weight:normal;">AETNA</div>
<div class="t" style="left:550px;width:600px;text-align:center;top:802.24px;font-size:12px;color:#000;font-weight:normal;">AET12536521477</div>
<div class="t" style="left:851px;width:600px;text-align:center;top:802.24px;font-size:12px;color:#000;font-weight:normal;">DR. ANA REYES</div>
<div class="t" style="left:1228px;top:802.24px;font-size:12px;color:#000;font-weight:normal;">Abdominal Pain</div>
<div class="r" style="left:41px;top:198px;width:1625px;height:1px;background:#000;"></div>
<div class="r" style="left:41px;top:232px;width:1625px;height:1px;background:#000;"></div>
<div class="r" style="left:41px;top:266px;width:1625px;height:1px;background:#000;"></div>
<div class="r" style="left:41px;top:288px;width:1625px;height:1px;background:#000;"></div>
<div class="r" style="left:41px;top:310px;width:1625px;height:1px;background:#000;"></div>
<div class="r" style="left:41px;top:332px;width:1625px;height:1px;background:#000;"></div>
<div class="r" style="left:41px;top:354px;width:1625px;height:1px;background:#000;"></div>
<div class="r" style="left:41px;top:376px;width:1625px;height:1px;background:#000;"></div>
<div class="r" style="left:41px;top:398px;width:1625px;height:1px;background:#000;"></div>
<div class="r" style="left:41px;top:420px;width:1625px;height:1px;background:#000;"></div>
<div class="r" style="left:41px;top:442px;width:1625px;height:1px;background:#000;"></div>
<div class="r" style="left:41px;top:464px;width:1625px;height:1px;background:#000;"></div>
<div class="r" style="left:41px;top:486px;width:1625px;height:1px;background:#000;"></div>
<div class="r" style="left:41px;top:508px;width:1625px;height:1px;background:#000;"></div>
<div class="r" style="left:41px;top:530px;width:1625px;height:1px;background:#000;"></div>
<div class="r" style="left:41px;top:552px;width:1625px;height:1px;background:#000;"></div>
<div class="r" style="left:41px;top:574px;width:1625px;height:1px;background:#000;"></div>
<div class="r" style="left:41px;top:596px;width:1625px;height:1px;background:#000;"></div>
<div class="r" style="left:41px;top:618px;width:1625px;height:1px;background:#000;"></div>
<div class="r" style="left:41px;top:640px;width:1625px;height:1px;background:#000;"></div>
<div class="r" style="left:41px;top:662px;width:1625px;height:1px;background:#000;"></div>
<div class="r" style="left:41px;top:684px;width:1625px;height:1px;background:#000;"></div>
<div class="r" style="left:41px;top:706px;width:1625px;height:1px;background:#000;"></div>
<div class="r" style="left:41px;top:728px;width:1625px;height:1px;background:#000;"></div>
<div class="r" style="left:41px;top:750px;width:1625px;height:1px;background:#000;"></div>
<div class="r" style="left:41px;top:772px;width:1625px;height:1px;background:#000;"></div>
<div class="r" style="left:41px;top:794px;width:1625px;height:1px;background:#000;"></div>
<div class="r" style="left:201px;top:199px;width:1px;height:607px;background:#000;"></div>
<div class="r" style="left:385px;top:199px;width:1px;height:607px;background:#000;"></div>
<div class="r" style="left:569px;top:199px;width:1px;height:607px;background:#000;"></div>
<div class="r" style="left:760px;top:199px;width:1px;height:607px;background:#000;"></div>
<div class="r" style="left:939px;top:199px;width:1px;height:607px;background:#000;"></div>
<div class="r" style="left:1076px;top:199px;width:1px;height:607px;background:#000;"></div>
<div class="r" style="left:1224px;top:199px;width:1px;height:607px;background:#000;"></div>
<div class="r" style="left:1399px;top:199px;width:1px;height:607px;background:#000;"></div>
<div class="r" style="left:1667px;top:198px;width:10px;height:1px;background:#e2e2e3;"></div>
<div class="r" style="left:1667px;top:232px;width:10px;height:1px;background:#e2e2e3;"></div>
<div class="r" style="left:1667px;top:266px;width:10px;height:1px;background:#e2e2e3;"></div>
<div class="r" style="left:1667px;top:288px;width:10px;height:1px;background:#e2e2e3;"></div>
<div class="r" style="left:1667px;top:310px;width:10px;height:1px;background:#e2e2e3;"></div>
<div class="r" style="left:1667px;top:332px;width:10px;height:1px;background:#e2e2e3;"></div>
<div class="r" style="left:1667px;top:354px;width:10px;height:1px;background:#e2e2e3;"></div>
<div class="r" style="left:1667px;top:376px;width:10px;height:1px;background:#e2e2e3;"></div>
<div class="r" style="left:1667px;top:398px;width:10px;height:1px;background:#e2e2e3;"></div>
<div class="r" style="left:1667px;top:420px;width:10px;height:1px;background:#e2e2e3;"></div>
<div class="r" style="left:1667px;top:442px;width:10px;height:1px;background:#e2e2e3;"></div>
<div class="r" style="left:1667px;top:464px;width:10px;height:1px;background:#e2e2e3;"></div>
<div class="r" style="left:1667px;top:486px;width:10px;height:1px;background:#e2e2e3;"></div>
<div class="r" style="left:1667px;top:508px;width:10px;height:1px;background:#e2e2e3;"></div>
<div class="r" style="left:1667px;top:530px;width:10px;height:1px;background:#e2e2e3;"></div>
<div class="r" style="left:1667px;top:552px;width:10px;height:1px;background:#e2e2e3;"></div>
<div class="r" style="left:1667px;top:574px;width:10px;height:1px;background:#e2e2e3;"></div>
<div class="r" style="left:1667px;top:596px;width:10px;height:1px;background:#e2e2e3;"></div>
<div class="r" style="left:1667px;top:618px;width:10px;height:1px;background:#e2e2e3;"></div>
<div class="r" style="left:1667px;top:640px;width:10px;height:1px;background:#e2e2e3;"></div>
<div class="r" style="left:1667px;top:662px;width:10px;height:1px;background:#e2e2e3;"></div>
<div class="r" style="left:1667px;top:684px;width:10px;height:1px;background:#e2e2e3;"></div>
<div class="r" style="left:1667px;top:706px;width:10px;height:1px;background:#e2e2e3;"></div>
<div class="r" style="left:1667px;top:728px;width:10px;height:1px;background:#e2e2e3;"></div>
<div class="r" style="left:1667px;top:750px;width:10px;height:1px;background:#e2e2e3;"></div>
<div class="r" style="left:1667px;top:772px;width:10px;height:1px;background:#e2e2e3;"></div>
<div class="r" style="left:1667px;top:794px;width:10px;height:1px;background:#e2e2e3;"></div>
<div class="r" style="left:1667px;top:816px;width:10px;height:1px;background:#e2e2e3;"></div>
<div class="r" style="left:41px;top:148px;width:1px;height:658px;background:#188038;"></div>
<div class="r" style="left:1666px;top:148px;width:1.2px;height:658px;background:#188038;"></div>
<div class="r" style="left:1667px;top:288px;width:10px;height:23px;background:transparent;border:1.5px solid #188038;box-sizing:border-box;"></div>
<div class="r" style="left:1667px;top:728px;width:10px;height:23px;background:transparent;border:2px solid #1a73e8;box-sizing:border-box;"></div>
<div class="r" style="left:1225px;top:662px;width:174px;height:22px;background:transparent;border:1px solid #188038;box-sizing:border-box;"></div>
</body></html>
